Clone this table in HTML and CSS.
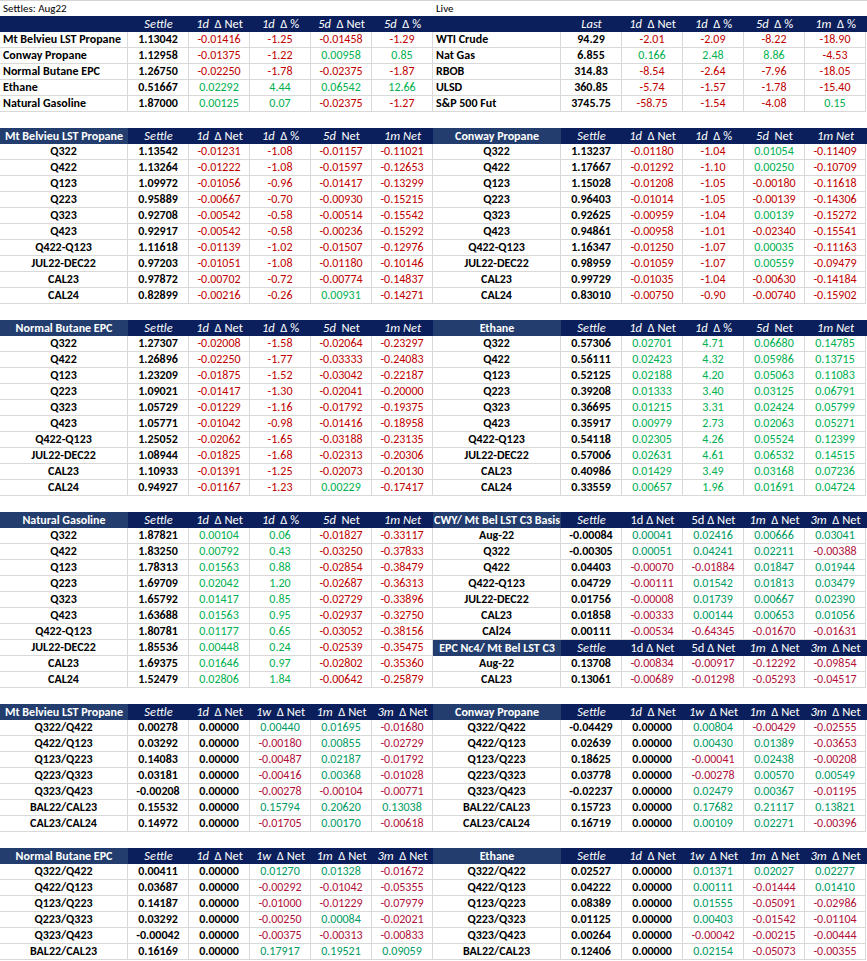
FILE: index.html
```html
<!DOCTYPE html>
<html>
<head>
<meta charset="utf-8">
<link rel="stylesheet" href="styles.css">
</head>
<body>
<div class="sheet">

  <div class="band">
    <div class="panel">
      <div class="row title"><div class="t">Settles: Aug22</div></div>
      <div class="row hd"><div class="h"></div><div class="h"><i>Settle</i></div><div class="h"><i>1d</i>&nbsp; Δ Net</div><div class="h"><i>1d</i>&nbsp; Δ %</div><div class="h"><i>5d</i>&nbsp; Δ Net</div><div class="h"><i>5d</i>&nbsp; Δ %</div></div>
      <div class="row"><div class="c lab">Mt Belvieu LST Propane</div><div class="c b">1.13042</div><div class="c r">-0.01416</div><div class="c r">-1.25</div><div class="c r">-0.01458</div><div class="c r">-1.29</div></div>
      <div class="row"><div class="c lab">Conway Propane</div><div class="c b">1.12958</div><div class="c r">-0.01375</div><div class="c r">-1.22</div><div class="c g">0.00958</div><div class="c g">0.85</div></div>
      <div class="row"><div class="c lab">Normal Butane EPC</div><div class="c b">1.26750</div><div class="c r">-0.02250</div><div class="c r">-1.78</div><div class="c r">-0.02375</div><div class="c r">-1.87</div></div>
      <div class="row"><div class="c lab">Ethane</div><div class="c b">0.51667</div><div class="c g">0.02292</div><div class="c g">4.44</div><div class="c g">0.06542</div><div class="c g">12.66</div></div>
      <div class="row"><div class="c lab">Natural Gasoline</div><div class="c b">1.87000</div><div class="c g">0.00125</div><div class="c g">0.07</div><div class="c r">-0.02375</div><div class="c r">-1.27</div></div>
    </div>
    <div class="panel">
      <div class="row title"><div class="t">Live</div></div>
      <div class="row hd"><div class="h"></div><div class="h"><i>Last</i></div><div class="h"><i>1d</i>&nbsp; Δ Net</div><div class="h"><i>1d</i>&nbsp; Δ %</div><div class="h"><i>5d</i>&nbsp; Δ %</div><div class="h"><i>1m</i>&nbsp; Δ %</div></div>
      <div class="row"><div class="c lab">WTI Crude</div><div class="c b">94.29</div><div class="c r">-2.01</div><div class="c r">-2.09</div><div class="c r">-8.22</div><div class="c r">-18.90</div></div>
      <div class="row"><div class="c lab">Nat Gas</div><div class="c b">6.855</div><div class="c g">0.166</div><div class="c g">2.48</div><div class="c g">8.86</div><div class="c r">-4.53</div></div>
      <div class="row"><div class="c lab">RBOB</div><div class="c b">314.83</div><div class="c r">-8.54</div><div class="c r">-2.64</div><div class="c r">-7.96</div><div class="c r">-18.05</div></div>
      <div class="row"><div class="c lab">ULSD</div><div class="c b">360.85</div><div class="c r">-5.74</div><div class="c r">-1.57</div><div class="c r">-1.78</div><div class="c r">-15.40</div></div>
      <div class="row"><div class="c lab">S&amp;P 500 Fut</div><div class="c b">3745.75</div><div class="c r">-58.75</div><div class="c r">-1.54</div><div class="c r">-4.08</div><div class="c g">0.15</div></div>
    </div>
  </div>

  <div class="gap"></div>

  <div class="band">
    <div class="panel">
      <div class="row hd"><div class="h hl">Mt Belvieu LST Propane</div><div class="h"><i>Settle</i></div><div class="h"><i>1d</i>&nbsp; Δ Net</div><div class="h"><i>1d</i>&nbsp; Δ %</div><div class="h"><i>5d</i>&nbsp; Net</div><div class="h"><i>1m Net</i></div></div>
      <div class="row"><div class="c k">Q322</div><div class="c b">1.13542</div><div class="c r">-0.01231</div><div class="c r">-1.08</div><div class="c r">-0.01157</div><div class="c r">-0.11021</div></div>
      <div class="row"><div class="c k">Q422</div><div class="c b">1.13264</div><div class="c r">-0.01222</div><div class="c r">-1.08</div><div class="c r">-0.01597</div><div class="c r">-0.12653</div></div>
      <div class="row"><div class="c k">Q123</div><div class="c b">1.09972</div><div class="c r">-0.01056</div><div class="c r">-0.96</div><div class="c r">-0.01417</div><div class="c r">-0.13299</div></div>
      <div class="row"><div class="c k">Q223</div><div class="c b">0.95889</div><div class="c r">-0.00667</div><div class="c r">-0.70</div><div class="c r">-0.00930</div><div class="c r">-0.15215</div></div>
      <div class="row"><div class="c k">Q323</div><div class="c b">0.92708</div><div class="c r">-0.00542</div><div class="c r">-0.58</div><div class="c r">-0.00514</div><div class="c r">-0.15542</div></div>
      <div class="row"><div class="c k">Q423</div><div class="c b">0.92917</div><div class="c r">-0.00542</div><div class="c r">-0.58</div><div class="c r">-0.00236</div><div class="c r">-0.15292</div></div>
      <div class="row"><div class="c k">Q422-Q123</div><div class="c b">1.11618</div><div class="c r">-0.01139</div><div class="c r">-1.02</div><div class="c r">-0.01507</div><div class="c r">-0.12976</div></div>
      <div class="row"><div class="c k">JUL22-DEC22</div><div class="c b">0.97203</div><div class="c r">-0.01051</div><div class="c r">-1.08</div><div class="c r">-0.01180</div><div class="c r">-0.10146</div></div>
      <div class="row"><div class="c k">CAL23</div><div class="c b">0.97872</div><div class="c r">-0.00702</div><div class="c r">-0.72</div><div class="c r">-0.00774</div><div class="c r">-0.14837</div></div>
      <div class="row"><div class="c k">CAL24</div><div class="c b">0.82899</div><div class="c r">-0.00216</div><div class="c r">-0.26</div><div class="c g">0.00931</div><div class="c r">-0.14271</div></div>
    </div>
    <div class="panel">
      <div class="row hd"><div class="h hl">Conway Propane</div><div class="h"><i>Settle</i></div><div class="h"><i>1d</i>&nbsp; Δ Net</div><div class="h"><i>1d</i>&nbsp; Δ %</div><div class="h"><i>5d</i>&nbsp; Net</div><div class="h"><i>1m Net</i></div></div>
      <div class="row"><div class="c k">Q322</div><div class="c b">1.13237</div><div class="c r">-0.01180</div><div class="c r">-1.04</div><div class="c g">0.01054</div><div class="c r">-0.11409</div></div>
      <div class="row"><div class="c k">Q422</div><div class="c b">1.17667</div><div class="c r">-0.01292</div><div class="c r">-1.10</div><div class="c g">0.00250</div><div class="c r">-0.10709</div></div>
      <div class="row"><div class="c k">Q123</div><div class="c b">1.15028</div><div class="c r">-0.01208</div><div class="c r">-1.05</div><div class="c r">-0.00180</div><div class="c r">-0.11618</div></div>
      <div class="row"><div class="c k">Q223</div><div class="c b">0.96403</div><div class="c r">-0.01014</div><div class="c r">-1.05</div><div class="c r">-0.00139</div><div class="c r">-0.14306</div></div>
      <div class="row"><div class="c k">Q323</div><div class="c b">0.92625</div><div class="c r">-0.00959</div><div class="c r">-1.04</div><div class="c g">0.00139</div><div class="c r">-0.15272</div></div>
      <div class="row"><div class="c k">Q423</div><div class="c b">0.94861</div><div class="c r">-0.00958</div><div class="c r">-1.01</div><div class="c r">-0.02340</div><div class="c r">-0.15541</div></div>
      <div class="row"><div class="c k">Q422-Q123</div><div class="c b">1.16347</div><div class="c r">-0.01250</div><div class="c r">-1.07</div><div class="c g">0.00035</div><div class="c r">-0.11163</div></div>
      <div class="row"><div class="c k">JUL22-DEC22</div><div class="c b">0.98959</div><div class="c r">-0.01059</div><div class="c r">-1.07</div><div class="c g">0.00559</div><div class="c r">-0.09479</div></div>
      <div class="row"><div class="c k">CAL23</div><div class="c b">0.99729</div><div class="c r">-0.01035</div><div class="c r">-1.04</div><div class="c r">-0.00630</div><div class="c r">-0.14184</div></div>
      <div class="row"><div class="c k">CAL24</div><div class="c b">0.83010</div><div class="c r">-0.00750</div><div class="c r">-0.90</div><div class="c r">-0.00740</div><div class="c r">-0.15902</div></div>
    </div>
  </div>

  <div class="gap"></div>

  <div class="band">
    <div class="panel">
      <div class="row hd"><div class="h hl">Normal Butane EPC</div><div class="h"><i>Settle</i></div><div class="h"><i>1d</i>&nbsp; Δ Net</div><div class="h"><i>1d</i>&nbsp; Δ %</div><div class="h"><i>5d</i>&nbsp; Net</div><div class="h"><i>1m Net</i></div></div>
      <div class="row"><div class="c k">Q322</div><div class="c b">1.27307</div><div class="c r">-0.02008</div><div class="c r">-1.58</div><div class="c r">-0.02064</div><div class="c r">-0.23297</div></div>
      <div class="row"><div class="c k">Q422</div><div class="c b">1.26896</div><div class="c r">-0.02250</div><div class="c r">-1.77</div><div class="c r">-0.03333</div><div class="c r">-0.24083</div></div>
      <div class="row"><div class="c k">Q123</div><div class="c b">1.23209</div><div class="c r">-0.01875</div><div class="c r">-1.52</div><div class="c r">-0.03042</div><div class="c r">-0.22187</div></div>
      <div class="row"><div class="c k">Q223</div><div class="c b">1.09021</div><div class="c r">-0.01417</div><div class="c r">-1.30</div><div class="c r">-0.02041</div><div class="c r">-0.20000</div></div>
      <div class="row"><div class="c k">Q323</div><div class="c b">1.05729</div><div class="c r">-0.01229</div><div class="c r">-1.16</div><div class="c r">-0.01792</div><div class="c r">-0.19375</div></div>
      <div class="row"><div class="c k">Q423</div><div class="c b">1.05771</div><div class="c r">-0.01042</div><div class="c r">-0.98</div><div class="c r">-0.01416</div><div class="c r">-0.18958</div></div>
      <div class="row"><div class="c k">Q422-Q123</div><div class="c b">1.25052</div><div class="c r">-0.02062</div><div class="c r">-1.65</div><div class="c r">-0.03188</div><div class="c r">-0.23135</div></div>
      <div class="row"><div class="c k">JUL22-DEC22</div><div class="c b">1.08944</div><div class="c r">-0.01825</div><div class="c r">-1.68</div><div class="c r">-0.02313</div><div class="c r">-0.20306</div></div>
      <div class="row"><div class="c k">CAL23</div><div class="c b">1.10933</div><div class="c r">-0.01391</div><div class="c r">-1.25</div><div class="c r">-0.02073</div><div class="c r">-0.20130</div></div>
      <div class="row"><div class="c k">CAL24</div><div class="c b">0.94927</div><div class="c r">-0.01167</div><div class="c r">-1.23</div><div class="c g">0.00229</div><div class="c r">-0.17417</div></div>
    </div>
    <div class="panel">
      <div class="row hd"><div class="h hl">Ethane</div><div class="h"><i>Settle</i></div><div class="h"><i>1d</i>&nbsp; Δ Net</div><div class="h"><i>1d</i>&nbsp; Δ %</div><div class="h"><i>5d</i>&nbsp; Net</div><div class="h"><i>1m Net</i></div></div>
      <div class="row"><div class="c k">Q322</div><div class="c b">0.57306</div><div class="c g">0.02701</div><div class="c g">4.71</div><div class="c g">0.06680</div><div class="c g">0.14785</div></div>
      <div class="row"><div class="c k">Q422</div><div class="c b">0.56111</div><div class="c g">0.02423</div><div class="c g">4.32</div><div class="c g">0.05986</div><div class="c g">0.13715</div></div>
      <div class="row"><div class="c k">Q123</div><div class="c b">0.52125</div><div class="c g">0.02188</div><div class="c g">4.20</div><div class="c g">0.05063</div><div class="c g">0.11083</div></div>
      <div class="row"><div class="c k">Q223</div><div class="c b">0.39208</div><div class="c g">0.01333</div><div class="c g">3.40</div><div class="c g">0.03125</div><div class="c g">0.06791</div></div>
      <div class="row"><div class="c k">Q323</div><div class="c b">0.36695</div><div class="c g">0.01215</div><div class="c g">3.31</div><div class="c g">0.02424</div><div class="c g">0.05799</div></div>
      <div class="row"><div class="c k">Q423</div><div class="c b">0.35917</div><div class="c g">0.00979</div><div class="c g">2.73</div><div class="c g">0.02063</div><div class="c g">0.05271</div></div>
      <div class="row"><div class="c k">Q422-Q123</div><div class="c b">0.54118</div><div class="c g">0.02305</div><div class="c g">4.26</div><div class="c g">0.05524</div><div class="c g">0.12399</div></div>
      <div class="row"><div class="c k">JUL22-DEC22</div><div class="c b">0.57006</div><div class="c g">0.02631</div><div class="c g">4.61</div><div class="c g">0.06532</div><div class="c g">0.14515</div></div>
      <div class="row"><div class="c k">CAL23</div><div class="c b">0.40986</div><div class="c g">0.01429</div><div class="c g">3.49</div><div class="c g">0.03168</div><div class="c g">0.07236</div></div>
      <div class="row"><div class="c k">CAL24</div><div class="c b">0.33559</div><div class="c g">0.00657</div><div class="c g">1.96</div><div class="c g">0.01691</div><div class="c g">0.04724</div></div>
    </div>
  </div>

  <div class="gap"></div>

  <div class="band">
    <div class="panel">
      <div class="row hd"><div class="h hl">Natural Gasoline</div><div class="h"><i>Settle</i></div><div class="h"><i>1d</i>&nbsp; Δ Net</div><div class="h"><i>1d</i>&nbsp; Δ %</div><div class="h"><i>5d</i>&nbsp; Net</div><div class="h"><i>1m Net</i></div></div>
      <div class="row"><div class="c k">Q322</div><div class="c b">1.87821</div><div class="c g">0.00104</div><div class="c g">0.06</div><div class="c r">-0.01827</div><div class="c r">-0.33117</div></div>
      <div class="row"><div class="c k">Q422</div><div class="c b">1.83250</div><div class="c g">0.00792</div><div class="c g">0.43</div><div class="c r">-0.03250</div><div class="c r">-0.37833</div></div>
      <div class="row"><div class="c k">Q123</div><div class="c b">1.78313</div><div class="c g">0.01563</div><div class="c g">0.88</div><div class="c r">-0.02854</div><div class="c r">-0.38479</div></div>
      <div class="row"><div class="c k">Q223</div><div class="c b">1.69709</div><div class="c g">0.02042</div><div class="c g">1.20</div><div class="c r">-0.02687</div><div class="c r">-0.36313</div></div>
      <div class="row"><div class="c k">Q323</div><div class="c b">1.65792</div><div class="c g">0.01417</div><div class="c g">0.85</div><div class="c r">-0.02729</div><div class="c r">-0.33896</div></div>
      <div class="row"><div class="c k">Q423</div><div class="c b">1.63688</div><div class="c g">0.01563</div><div class="c g">0.95</div><div class="c r">-0.02937</div><div class="c r">-0.32750</div></div>
      <div class="row"><div class="c k">Q422-Q123</div><div class="c b">1.80781</div><div class="c g">0.01177</div><div class="c g">0.65</div><div class="c r">-0.03052</div><div class="c r">-0.38156</div></div>
      <div class="row"><div class="c k">JUL22-DEC22</div><div class="c b">1.85536</div><div class="c g">0.00448</div><div class="c g">0.24</div><div class="c r">-0.02539</div><div class="c r">-0.35475</div></div>
      <div class="row"><div class="c k">CAL23</div><div class="c b">1.69375</div><div class="c g">0.01646</div><div class="c g">0.97</div><div class="c r">-0.02802</div><div class="c r">-0.35360</div></div>
      <div class="row"><div class="c k">CAL24</div><div class="c b">1.52479</div><div class="c g">0.02806</div><div class="c g">1.84</div><div class="c r">-0.00642</div><div class="c r">-0.25879</div></div>
    </div>
    <div class="panel dark">
      <div class="row hd"><div class="h hl">CWY/ Mt Bel LST C3 Basis</div><div class="h"><i>Settle</i></div><div class="h">1d Δ Net</div><div class="h">5d Δ Net</div><div class="h"><i>1m</i>&nbsp; Δ Net</div><div class="h"><i>3m</i>&nbsp; Δ Net</div></div>
      <div class="row"><div class="c k">Aug-22</div><div class="c b">-0.00084</div><div class="c g">0.00041</div><div class="c g">0.02416</div><div class="c g">0.00666</div><div class="c g">0.03041</div></div>
      <div class="row"><div class="c k">Q322</div><div class="c b">-0.00305</div><div class="c g">0.00051</div><div class="c g">0.04241</div><div class="c g">0.02211</div><div class="c r">-0.00388</div></div>
      <div class="row"><div class="c k">Q422</div><div class="c b">0.04403</div><div class="c r">-0.00070</div><div class="c r">-0.01884</div><div class="c g">0.01847</div><div class="c g">0.01944</div></div>
      <div class="row"><div class="c k">Q422-Q123</div><div class="c b">0.04729</div><div class="c r">-0.00111</div><div class="c g">0.01542</div><div class="c g">0.01813</div><div class="c g">0.03479</div></div>
      <div class="row"><div class="c k">JUL22-DEC22</div><div class="c b">0.01756</div><div class="c r">-0.00008</div><div class="c g">0.01739</div><div class="c g">0.00667</div><div class="c g">0.02390</div></div>
      <div class="row"><div class="c k">CAL23</div><div class="c b">0.01858</div><div class="c r">-0.00333</div><div class="c g">0.00144</div><div class="c g">0.00653</div><div class="c g">0.01056</div></div>
      <div class="row"><div class="c k">CAl24</div><div class="c b">0.00111</div><div class="c r">-0.00534</div><div class="c r">-0.64345</div><div class="c r">-0.01670</div><div class="c r">-0.01631</div></div>
      <div class="row hd"><div class="h hl">EPC Nc4/ Mt Bel LST C3</div><div class="h"><i>Settle</i></div><div class="h">1d Δ Net</div><div class="h">5d Δ Net</div><div class="h"><i>1m</i>&nbsp; Δ Net</div><div class="h"><i>3m</i>&nbsp; Δ Net</div></div>
      <div class="row"><div class="c k">Aug-22</div><div class="c b">0.13708</div><div class="c r">-0.00834</div><div class="c r">-0.00917</div><div class="c r">-0.12292</div><div class="c r">-0.09854</div></div>
      <div class="row"><div class="c k">CAL23</div><div class="c b">0.13061</div><div class="c r">-0.00689</div><div class="c r">-0.01298</div><div class="c r">-0.05293</div><div class="c r">-0.04517</div></div>
    </div>
  </div>

  <div class="gap"></div>

  <div class="band dark">
    <div class="panel">
      <div class="row hd"><div class="h hl">Mt Belvieu LST Propane</div><div class="h"><i>Settle</i></div><div class="h"><i>1d</i>&nbsp; Δ Net</div><div class="h"><i>1w</i>&nbsp; Δ Net</div><div class="h"><i>1m</i>&nbsp; Δ Net</div><div class="h"><i>3m</i>&nbsp; Δ Net</div></div>
      <div class="row"><div class="c k">Q322/Q422</div><div class="c b">0.00278</div><div class="c b">0.00000</div><div class="c g">0.00440</div><div class="c g">0.01695</div><div class="c r">-0.01680</div></div>
      <div class="row"><div class="c k">Q422/Q123</div><div class="c b">0.03292</div><div class="c b">0.00000</div><div class="c r">-0.00180</div><div class="c g">0.00855</div><div class="c r">-0.02729</div></div>
      <div class="row"><div class="c k">Q123/Q223</div><div class="c b">0.14083</div><div class="c b">0.00000</div><div class="c r">-0.00487</div><div class="c g">0.02187</div><div class="c r">-0.01792</div></div>
      <div class="row"><div class="c k">Q223/Q323</div><div class="c b">0.03181</div><div class="c b">0.00000</div><div class="c r">-0.00416</div><div class="c g">0.00368</div><div class="c r">-0.01028</div></div>
      <div class="row"><div class="c k">Q323/Q423</div><div class="c b">-0.00208</div><div class="c b">0.00000</div><div class="c r">-0.00278</div><div class="c r">-0.00104</div><div class="c r">-0.00771</div></div>
      <div class="row"><div class="c k">BAL22/CAL23</div><div class="c b">0.15532</div><div class="c b">0.00000</div><div class="c g">0.15794</div><div class="c g">0.20620</div><div class="c g">0.13038</div></div>
      <div class="row"><div class="c k">CAL23/CAL24</div><div class="c b">0.14972</div><div class="c b">0.00000</div><div class="c r">-0.01705</div><div class="c g">0.00170</div><div class="c r">-0.00618</div></div>
    </div>
    <div class="panel">
      <div class="row hd"><div class="h hl">Conway Propane</div><div class="h"><i>Settle</i></div><div class="h"><i>1d</i>&nbsp; Δ Net</div><div class="h"><i>1w</i>&nbsp; Δ Net</div><div class="h"><i>1m</i>&nbsp; Δ Net</div><div class="h"><i>3m</i>&nbsp; Δ Net</div></div>
      <div class="row"><div class="c k">Q322/Q422</div><div class="c b">-0.04429</div><div class="c b">0.00000</div><div class="c g">0.00804</div><div class="c r">-0.00429</div><div class="c r">-0.02555</div></div>
      <div class="row"><div class="c k">Q422/Q123</div><div class="c b">0.02639</div><div class="c b">0.00000</div><div class="c g">0.00430</div><div class="c g">0.01389</div><div class="c r">-0.03653</div></div>
      <div class="row"><div class="c k">Q123/Q223</div><div class="c b">0.18625</div><div class="c b">0.00000</div><div class="c r">-0.00041</div><div class="c g">0.02438</div><div class="c r">-0.00208</div></div>
      <div class="row"><div class="c k">Q223/Q323</div><div class="c b">0.03778</div><div class="c b">0.00000</div><div class="c r">-0.00278</div><div class="c g">0.00570</div><div class="c g">0.00549</div></div>
      <div class="row"><div class="c k">Q323/Q423</div><div class="c b">-0.02237</div><div class="c b">0.00000</div><div class="c g">0.02479</div><div class="c g">0.00367</div><div class="c r">-0.01195</div></div>
      <div class="row"><div class="c k">BAL22/CAL23</div><div class="c b">0.15723</div><div class="c b">0.00000</div><div class="c g">0.17682</div><div class="c g">0.21117</div><div class="c g">0.13821</div></div>
      <div class="row"><div class="c k">CAL23/CAL24</div><div class="c b">0.16719</div><div class="c b">0.00000</div><div class="c g">0.00109</div><div class="c g">0.02271</div><div class="c r">-0.00396</div></div>
    </div>
  </div>

  <div class="gap"></div>

  <div class="band dark">
    <div class="panel">
      <div class="row hd"><div class="h hl">Normal Butane EPC</div><div class="h"><i>Settle</i></div><div class="h"><i>1d</i>&nbsp; Δ Net</div><div class="h"><i>1w</i>&nbsp; Δ Net</div><div class="h"><i>1m</i>&nbsp; Δ Net</div><div class="h"><i>3m</i>&nbsp; Δ Net</div></div>
      <div class="row"><div class="c k">Q322/Q422</div><div class="c b">0.00411</div><div class="c b">0.00000</div><div class="c g">0.01270</div><div class="c g">0.01328</div><div class="c r">-0.01672</div></div>
      <div class="row"><div class="c k">Q422/Q123</div><div class="c b">0.03687</div><div class="c b">0.00000</div><div class="c r">-0.00292</div><div class="c r">-0.01042</div><div class="c r">-0.05355</div></div>
      <div class="row"><div class="c k">Q123/Q223</div><div class="c b">0.14187</div><div class="c b">0.00000</div><div class="c r">-0.01000</div><div class="c r">-0.01229</div><div class="c r">-0.07979</div></div>
      <div class="row"><div class="c k">Q223/Q323</div><div class="c b">0.03292</div><div class="c b">0.00000</div><div class="c r">-0.00250</div><div class="c g">0.00084</div><div class="c r">-0.02021</div></div>
      <div class="row"><div class="c k">Q323/Q423</div><div class="c b">-0.00042</div><div class="c b">0.00000</div><div class="c r">-0.00375</div><div class="c r">-0.00313</div><div class="c r">-0.00833</div></div>
      <div class="row"><div class="c k">BAL22/CAL23</div><div class="c b">0.16169</div><div class="c b">0.00000</div><div class="c g">0.17917</div><div class="c g">0.19521</div><div class="c g">0.09059</div></div>
    </div>
    <div class="panel">
      <div class="row hd"><div class="h hl">Ethane</div><div class="h"><i>Settle</i></div><div class="h"><i>1d</i>&nbsp; Δ Net</div><div class="h"><i>1w</i>&nbsp; Δ Net</div><div class="h"><i>1m</i>&nbsp; Δ Net</div><div class="h"><i>3m</i>&nbsp; Δ Net</div></div>
      <div class="row"><div class="c k">Q322/Q422</div><div class="c b">0.02527</div><div class="c b">0.00000</div><div class="c g">0.01371</div><div class="c g">0.02027</div><div class="c g">0.02277</div></div>
      <div class="row"><div class="c k">Q422/Q123</div><div class="c b">0.04222</div><div class="c b">0.00000</div><div class="c g">0.00111</div><div class="c r">-0.01444</div><div class="c g">0.01410</div></div>
      <div class="row"><div class="c k">Q123/Q223</div><div class="c b">0.08389</div><div class="c b">0.00000</div><div class="c g">0.01555</div><div class="c r">-0.05091</div><div class="c r">-0.02986</div></div>
      <div class="row"><div class="c k">Q223/Q323</div><div class="c b">0.01125</div><div class="c b">0.00000</div><div class="c g">0.00403</div><div class="c r">-0.01542</div><div class="c r">-0.01104</div></div>
      <div class="row"><div class="c k">Q323/Q423</div><div class="c b">0.00264</div><div class="c b">0.00000</div><div class="c r">-0.00042</div><div class="c r">-0.00215</div><div class="c r">-0.00444</div></div>
      <div class="row"><div class="c k">BAL22/CAL23</div><div class="c b">0.12406</div><div class="c b">0.00000</div><div class="c g">0.02154</div><div class="c r">-0.05073</div><div class="c r">-0.00355</div></div>
    </div>
  </div>

</div>
</body>
</html>
```

FILE: styles.css
```css
html, body {
  margin: 0;
  padding: 0;
  background: #ffffff;
}

.sheet {
  width: 867px;
  font-family: Carlito, Lato, "Liberation Sans", sans-serif;
  font-size: 12px;
  color: #000000;
  border-top: 1px solid #d4d4d4;
  box-sizing: border-box;
}

.band {
  display: grid;
  grid-template-columns: 433px 434px;
}

.panel {
  display: flex;
  flex-direction: column;
}

.row {
  display: grid;
  grid-template-columns: 128px repeat(5, 61px);
  height: 16px;
}

.gap {
  height: 16px;
}

.title {
  height: 15px;
  display: flex;
}

.t {
  font-size: 11px;
  line-height: 15px;
  padding-left: 3px;
  white-space: nowrap;
}

.c {
  box-sizing: border-box;
  border-right: 1px solid #d9d9d9;
  border-bottom: 1px solid #d9d9d9;
  line-height: 15px;
  text-align: center;
  white-space: nowrap;
  overflow: hidden;
}

.lab {
  text-align: left;
  padding-left: 3px;
  font-weight: 700;
}

.k {
  font-weight: 700;
}

.b {
  font-weight: 700;
  color: #000000;
}

.r {
  color: #c00000;
}

.g {
  color: #00b050;
}

.dark .r {
  color: #b0103a;
}

.dark .g {
  color: #009a62;
}

.hd {
  background: #0b1f5c;
}

.h {
  color: #ffffff;
  font-size: 12.5px;
  line-height: 16px;
  text-align: center;
  white-space: nowrap;
  overflow: hidden;
}

.h i {
  font-style: italic;
}

.hl {
  background: #223d6e;
  font-weight: 700;
  font-size: 12px;
}
```
